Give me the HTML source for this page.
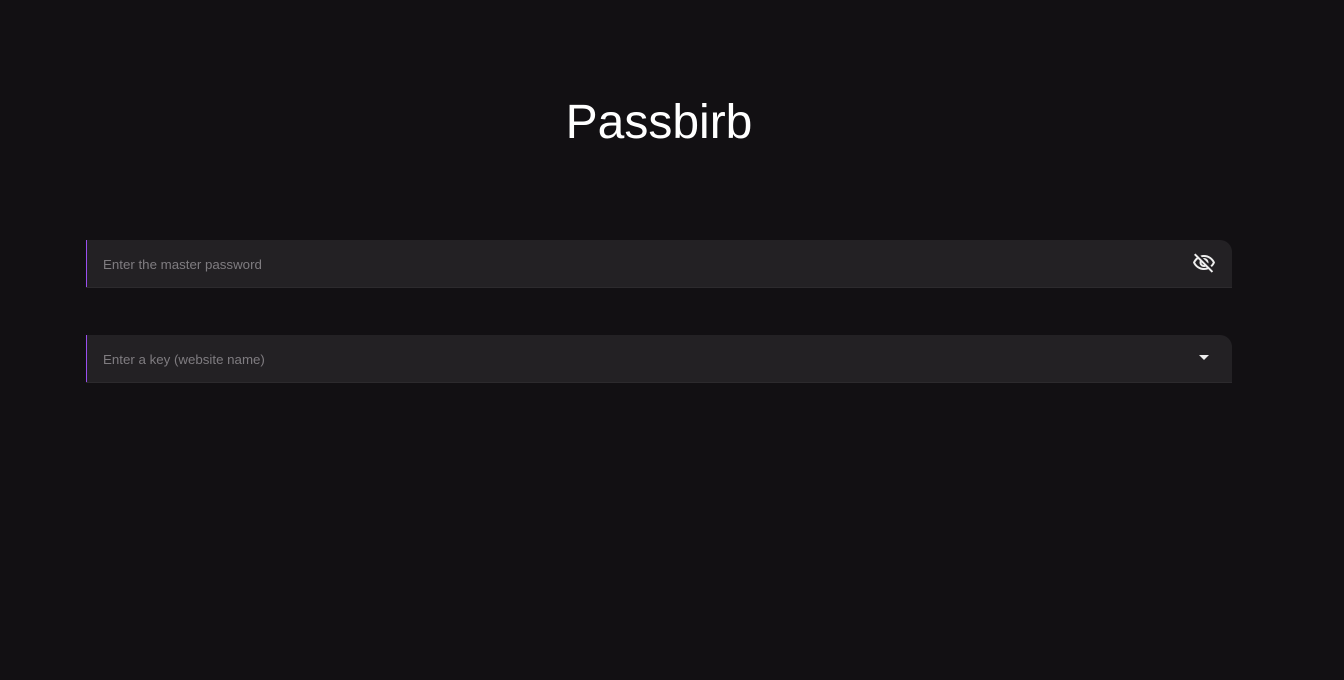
<!DOCTYPE html>
<html><head><meta charset="utf-8"><style>
body{margin:0;background:#121013;width:1344px;height:680px;overflow:hidden;font-family:"Liberation Sans",sans-serif}
h1{position:absolute;left:0;width:1318px;top:95px;margin:0;text-align:center;color:#fff;font-weight:400;font-size:48px;line-height:56px}
.f{position:absolute;left:86px;width:1146px;height:47px;background:#232124;border-left:1px solid #9a4ef0;border-radius:0 12px 0 0;box-shadow:0 1px 0 #2c2a2d;box-sizing:border-box}
.f span{position:absolute;left:16px;top:17px;font-size:13.3px;color:#7f7c80}
.f svg{position:absolute;right:16px;top:11px}
</style></head><body>
<h1>Passbirb</h1>
<div class="f" style="top:240px"><span>Enter the master password</span>
<svg width="24" height="24" viewBox="0 0 24 24"><path fill="#eee" d="M12 6c3.79 0 7.17 2.130 8.82 5.5-.59 1.22-1.42 2.27-2.41 3.12l1.41 1.41c1.39-1.23 2.49-2.77 3.18-4.53C21.27 7.11 17 4 12 4c-1.27 0-2.49.2-3.64.57l1.65 1.65C10.66 6.09 11.32 6 12 6zm-1.07 1.14L13 9.21c.57.25 1.03.71 1.28 1.28l2.070 2.07c.08-.34.14-.7.14-1.07C16.5 9.01 14.48 7 12 7c-.37 0-.72.05-1.070.14zM2.01 3.87l2.68 2.68C3.06 7.830 1.77 9.53 1 11.5 2.73 15.89 7 19 12 19c1.52 0 2.98-.29 4.32-.82l3.42 3.420 1.41-1.41L3.42 2.45 2.01 3.87zm7.5 7.5l2.61 2.61c-.04.01-.08.02-.12.02-1.38 0-2.5-1.12-2.5-2.5 0-.05.01-.08.01-.13zm-3.4-3.4l1.75 1.75c-.23.55-.36 1.15-.36 1.78 0 2.48 2.02 4.5 4.5 4.5.63 0 1.23-.13 1.77-.36l.98.98c-.88.24-1.8.38-2.75.38-3.79 0-7.17-2.13-8.82-5.5.7-1.43 1.72-2.61 2.93-3.53z"/></svg></div>
<div class="f" style="top:335px"><span>Enter a key (website name)</span>
<svg width="24" height="24" viewBox="0 0 24 24" style="top:10px"><path fill="#eee" d="M7 10l5 5 5-5z"/></svg></div>
</body></html>
